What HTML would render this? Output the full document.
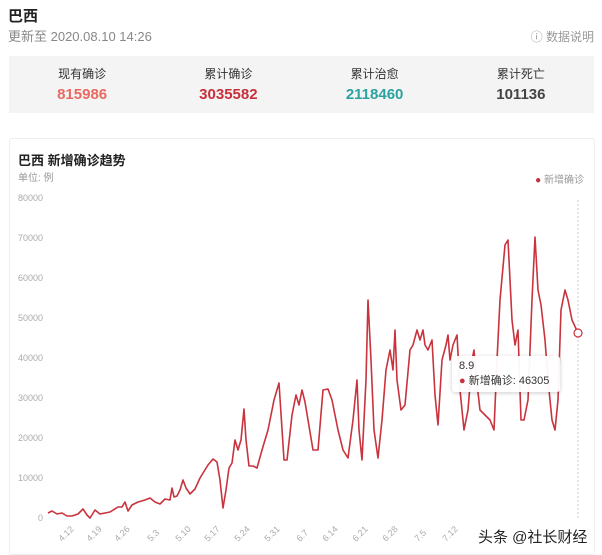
<!DOCTYPE html>
<html><head><meta charset="utf-8"><style>
body{margin:0;width:602px;height:555px;background:#fff;font-family:"Liberation Sans","Noto Sans CJK SC",sans-serif;position:relative;overflow:hidden}
.a{position:absolute}
</style></head><body>
<div class="a" style="left:8px;top:5px;font-size:15px;font-weight:bold;color:#222">巴西</div>
<div class="a" style="left:8px;top:26px;font-size:13px;color:#888">更新至 2020.08.10 14:26</div>
<div class="a" style="right:8px;top:28px;font-size:12px;color:#999">ⓘ 数据说明</div>
<div class="a" style="left:9px;top:56px;width:585px;height:57px;background:#f4f4f5"></div>
<div class="a" style="left:9px;top:65px;width:585px;display:flex;text-align:center">
 <div style="flex:1"><div style="font-size:12px;color:#333">现有确诊</div><div style="font-size:15px;font-weight:bold;color:#e86a60;margin-top:4px">815986</div></div>
 <div style="flex:1"><div style="font-size:12px;color:#333">累计确诊</div><div style="font-size:15px;font-weight:bold;color:#c7303a;margin-top:4px">3035582</div></div>
 <div style="flex:1"><div style="font-size:12px;color:#333">累计治愈</div><div style="font-size:15px;font-weight:bold;color:#2aa3a0;margin-top:4px">2118460</div></div>
 <div style="flex:1"><div style="font-size:12px;color:#333">累计死亡</div><div style="font-size:15px;font-weight:bold;color:#444;margin-top:4px">101136</div></div>
</div>
<div class="a" style="left:9px;top:138px;width:584px;height:415px;border:1px solid #eee;border-radius:3px"></div>
<div class="a" style="left:18px;top:150px;font-size:13px;font-weight:bold;color:#222">巴西 新增确诊趋势</div>
<div class="a" style="left:18px;top:169px;font-size:10px;color:#999">单位: 例</div>
<div class="a" style="right:18px;top:171px;font-size:10px;color:#999"><span style="color:#c7303a">●</span> 新增确诊</div>
<svg class="a" style="left:0;top:0" width="602" height="555">
<g font-size="9" fill="#aaa" text-anchor="end" font-family="Liberation Sans">
<text x="43" y="201">80000</text><text x="43" y="241">70000</text><text x="43" y="281">60000</text><text x="43" y="321">50000</text><text x="43" y="361">40000</text><text x="43" y="401">30000</text><text x="43" y="441">20000</text><text x="43" y="481">10000</text><text x="43" y="521">0</text>
</g>
<line x1="578" y1="200" x2="578" y2="520" stroke="#ccc" stroke-dasharray="2,2"/>
<polyline fill="none" stroke="#c9333d" stroke-width="1.6" stroke-linejoin="round" points="48,513 52,511 57,514 62,513 67,516 72,516 78,514 83,509 87,515 90,518 95,510 100,514 110,512 118,507 122,507 125,502 128,511 132,505 138,502 145,500 150,498 155,502 160,504 165,499 170,500 172,488 174,497 177,496 180,490 183,480 186,488 190,494 195,489 200,478 208,465 213,459 217,462 220,480 223,508 226,490 229,468 232,463 235,440 238,450 241,440 244,409 246,440 249,466 253,466 257,468 262,450 268,430 274,400 279,383 284,460 287,460 292,415 296,395 299,405 302,390 305,402 308,420 313,450 318,450 323,390 328,389 332,400 338,430 343,450 348,458 353,420 357,380 359,430 362,460 366,380 368,300 371,360 374,430 378,458 382,420 386,370 390,350 393,370 395,330 397,380 401,410 405,405 410,350 413,345 417,330 420,340 423,330 425,345 428,350 432,340 435,395 438,425 442,360 446,345 448,335 450,360 453,345 457,335 460,390 464,430 468,410 472,360 474,350 476,375 480,410 485,415 490,420 494,430 497,360 500,300 505,245 508,240 512,320 515,345 518,330 521,420 524,420 528,400 532,300 535,237 538,290 541,305 545,340 548,380 552,420 555,430 558,400 561,310 565,290 568,300 572,320 578,333"/>
<circle cx="578" cy="333" r="4" fill="#fff" stroke="#c9333d" stroke-width="1.2"/>
<g font-size="9" fill="#aaa" font-family="Liberation Sans">
<text transform="translate(62,542) rotate(-45)">4.12</text><text transform="translate(90,542) rotate(-45)">4.19</text><text transform="translate(118,542) rotate(-45)">4.26</text><text transform="translate(151,542) rotate(-45)">5.3</text><text transform="translate(179,542) rotate(-45)">5.10</text><text transform="translate(208,542) rotate(-45)">5.17</text><text transform="translate(238,542) rotate(-45)">5.24</text><text transform="translate(268,542) rotate(-45)">5.31</text><text transform="translate(300,542) rotate(-45)">6.7</text><text transform="translate(326,542) rotate(-45)">6.14</text><text transform="translate(356,542) rotate(-45)">6.21</text><text transform="translate(386,542) rotate(-45)">6.28</text><text transform="translate(418,542) rotate(-45)">7.5</text><text transform="translate(446,542) rotate(-45)">7.12</text>
</g>
</svg>
<div class="a" style="left:452px;top:356px;width:108px;height:36px;background:rgba(255,255,255,0.95);border-radius:3px;box-shadow:0 1px 4px rgba(0,0,0,0.2);font-size:11px;color:#333;padding:3px 7px;box-sizing:border-box;line-height:15px">8.9<br><span style="color:#c9333d">●</span> 新增确诊: 46305</div>
<div class="a" style="left:478px;top:526px;font-size:15px;color:#222;text-shadow:0 0 2px #fff">头条 @社长财经</div>
</body></html>
